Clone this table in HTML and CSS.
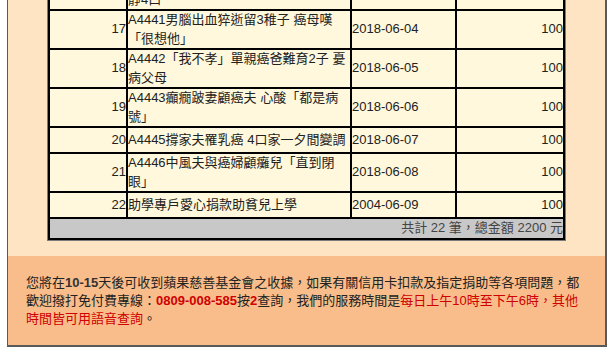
FILE: index.html
```html
<!DOCTYPE html>
<html lang="zh-Hant">
<head>
<meta charset="utf-8">
<title>捐款紀錄</title>
<link rel="stylesheet" href="styles.css">
</head>
<body>
<div class="panel">
  <div class="list-area">
    <table class="donations">
      <tr class="double">
        <td class="c-no">16</td>
        <td class="c-title">A4440失業父罹腦瘤 單親媽盼生活平<br>靜4口</td>
        <td class="c-date">2018-06-03</td>
        <td class="c-amt">100</td>
      </tr>
      <tr class="double">
        <td class="c-no">17</td>
        <td class="c-title">A4441男腦出血猝逝留3稚子 癌母嘆「很想他」</td>
        <td class="c-date">2018-06-04</td>
        <td class="c-amt">100</td>
      </tr>
      <tr class="double">
        <td class="c-no">18</td>
        <td class="c-title">A4442「我不孝」單親癌爸難育2子 憂病父母</td>
        <td class="c-date">2018-06-05</td>
        <td class="c-amt">100</td>
      </tr>
      <tr class="double">
        <td class="c-no">19</td>
        <td class="c-title">A4443癲癇跛妻顧癌夫 心酸「都是病號」</td>
        <td class="c-date">2018-06-06</td>
        <td class="c-amt">100</td>
      </tr>
      <tr class="single">
        <td class="c-no">20</td>
        <td class="c-title">A4445撐家夫罹乳癌 4口家一夕間變調</td>
        <td class="c-date">2018-06-07</td>
        <td class="c-amt">100</td>
      </tr>
      <tr class="double">
        <td class="c-no">21</td>
        <td class="c-title">A4446中風夫與癌婦顧癱兒「直到閉眼」</td>
        <td class="c-date">2018-06-08</td>
        <td class="c-amt">100</td>
      </tr>
      <tr class="single">
        <td class="c-no">22</td>
        <td class="c-title">助學專戶愛心捐款助貧兒上學</td>
        <td class="c-date">2004-06-09</td>
        <td class="c-amt">100</td>
      </tr>
      <tr class="total">
        <td colspan="4">共計 22 筆，總金額 2200 元</td>
      </tr>
    </table>
  </div>
  <div class="notice">
    <p>您將在<b class="dark">10-15</b>天後可收到蘋果慈善基金會之收據，如果有關信用卡扣款及指定捐助等各項問題，都歡迎撥打免付費專線：<b class="red">0809-008-585</b>按<b class="red">2</b>查詢，我們的服務時間是<span class="red">每日上午10時至下午6時，其他時間皆可用語音查詢</span>。</p>
  </div>
</div>
</body>
</html>
```

FILE: styles.css
```css
html, body {
  margin: 0;
  padding: 0;
  background: #ffffff;
  overflow: hidden;
}

body {
  font-family: "Liberation Sans", "Noto Sans CJK TC", sans-serif;
  font-size: 13px;
  color: #222;
}

.panel {
  width: 597px;
  margin-left: 7px;
  border-left: 1px solid #5a5a5a;
  border-right: 2px solid #5a5a5a;
  border-bottom: 2px solid #5a5a5a;
  height: 345px;
  display: flex;
  flex-direction: column;
}

.list-area {
  background: #ffe4c4;
  padding-bottom: 16px;
}

.donations {
  table-layout: fixed;
  width: 517px;
  margin: -30px auto 0;
  border-collapse: separate;
  border-spacing: 0;
  border: 1px solid #000;
  box-shadow: 0 0 0 1px #7a7a7a;
  line-height: 18.5px;
}

.donations td {
  border: 1px solid #000;
  background: #fff8dc;
  padding: 0;
  color: #222;
}

.c-no {
  width: 76px;
  text-align: right;
}

.c-title {
  width: 222px;
  text-align: left;
}

.c-date {
  width: 103px;
  text-align: left;
}

.c-amt {
  width: 106px;
  text-align: right;
}

.single td {
  height: 24px;
}

.donations .total td {
  background: #c8c8c8;
  text-align: right;
  color: #444;
  height: 19px;
}

.notice {
  flex: 1;
  background: #f8bd8a;
  padding: 18px 20px 0 18px;
}

.notice p {
  margin: 0;
  width: 558px;
  line-height: 18px;
  color: #222;
}

.notice b {
  font-weight: bold;
}

.dark {
  color: #333;
}

.red {
  color: #d00000;
}
```
